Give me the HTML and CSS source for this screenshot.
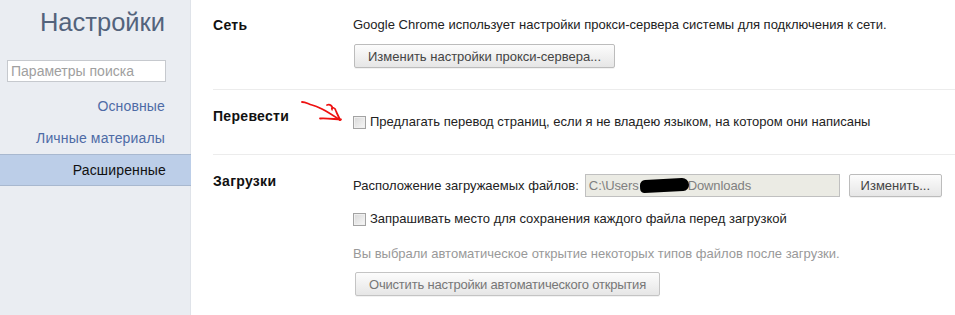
FILE: index.html
```html
<!DOCTYPE html>
<html lang="ru">
<head>
<meta charset="utf-8">
<link rel="stylesheet" href="styles.css">
</head>
<body>
<div class="page">
  <nav class="sidebar">
    <h1 class="title">Настройки</h1>
    <div class="search"><input type="text" placeholder="Параметры поиска"></div>
    <ul class="nav">
      <li class="nav-item">Основные</li>
      <li class="nav-item">Личные материалы</li>
      <li class="nav-item selected">Расширенные</li>
    </ul>
  </nav>
  <main class="main">
    <section class="section s-net">
      <h3 class="sec-title">Сеть</h3>
      <div class="sec-body">
        <div class="line">Google Chrome использует настройки прокси-сервера системы для подключения к сети.</div>
        <button class="btn btn-proxy">Изменить настройки прокси-сервера...</button>
      </div>
    </section>
    <section class="section s-translate">
      <h3 class="sec-title">Перевести</h3>
      <div class="sec-body">
        <label class="check"><span class="box"></span>Предлагать перевод страниц, если я не владею языком, на котором они написаны</label>
      </div>
      <svg class="arrow" width="50" height="30" viewBox="0 0 50 30">
        <path d="M2 3 C6 3 8 5 12 6 C16 7 18 8 22 10 C28 13 34 17 40 21" fill="none" stroke="#ee1111" stroke-width="1.8" stroke-linecap="round"/>
        <path d="M27 6 C30 5 33 7 32 10 C31 8 35 8 36 12 C37 15 39 18 40 21" fill="none" stroke="#ee1111" stroke-width="1.8" stroke-linecap="round"/>
        <path d="M20 19.5 C26 19 33 20 41 20.5" fill="none" stroke="#ee1111" stroke-width="1.8" stroke-linecap="round"/>
      </svg>
    </section>
    <section class="section s-down">
      <h3 class="sec-title">Загрузки</h3>
      <div class="sec-body">
        <div class="loc-row">
          <span class="loc-label">Расположение загружаемых файлов:</span>
          <div class="path">C:\Users<span class="blot"></span>Downloads</div>
          <button class="btn btn-change">Изменить...</button>
        </div>
        <label class="check check-ask"><span class="box"></span>Запрашивать место для сохранения каждого файла перед загрузкой</label>
        <div class="note">Вы выбрали автоматическое открытие некоторых типов файлов после загрузки.</div>
        <button class="btn btn-clear" disabled>Очистить настройки автоматического открытия</button>
      </div>
    </section>
  </main>
</div>
</body>
</html>
```
FILE: styles.css
```css
* { box-sizing: border-box; }
html, body { margin: 0; padding: 0; background: #fff; }
body {
  font-family: "Liberation Sans", Arial, sans-serif;
  font-size: 13px;
  color: #222;
}
.page {
  display: flex;
  width: 955px;
  height: 315px;
  overflow: hidden;
}
.sidebar {
  width: 191px;
  flex: none;
  background: #eaedf2;
  border-right: 1px solid #dfe3e9;
  display: flex;
  flex-direction: column;
}
.title {
  margin: 0;
  padding: 6px 25px 0 0;
  text-align: right;
  font-weight: normal;
  font-size: 25.5px;
  line-height: 32px;
  color: #53637c;
}
.search {
  padding: 22px 0 0 7px;
}
.search input {
  width: 159px;
  height: 22px;
  border: 1px solid #c6c9ce;
  background: #fff;
  font-family: "Liberation Sans", Arial, sans-serif;
  font-size: 14px;
  padding: 1px 3px;
  margin: 0;
  outline: none;
}
.search input::placeholder { color: #a0a0a0; }
.nav {
  list-style: none;
  margin: 0;
  padding: 8px 0 0 0;
}
.nav-item {
  height: 32px;
  line-height: 32px;
  text-align: right;
  padding-right: 25px;
  color: #4e6ba6;
  font-size: 14px;
  letter-spacing: 0.15px;
}
.nav-item.selected {
  line-height: 30px;
  background: #bccee8;
  color: #111;
  border-top: 1px solid #a8b8cf;
  border-bottom: 1px solid #a8b8cf;
  margin-right: -1px;
}
.main {
  flex: 1;
  padding-left: 22px;
}
.section {
  display: grid;
  grid-template-columns: 140px 1fr;
  border-bottom: 1px solid #ececec;
  position: relative;
}
.sec-title {
  margin: 0;
  font-size: 14px;
  font-weight: bold;
  line-height: 18px;
  color: #111;
  letter-spacing: 0.3px;
}
.sec-body { line-height: 18px; }
.s-net { padding: 16px 0 21px 0; }
.btn {
  font-family: "Liberation Sans", Arial, sans-serif;
  font-size: 13px;
  color: #444;
  background: linear-gradient(#fcfcfc, #e6e6e6);
  border: 1px solid #bcbcbc;
  border-radius: 2px;
  height: 24px;
  padding: 0 13px;
  box-shadow: 0 1px 0 rgba(0,0,0,0.05);
}
.btn-proxy { margin-top: 10px; margin-left: 1px; }
.s-translate { height: 65px; }
.s-translate .sec-title { padding-top: 17px; }
.s-translate .sec-body { padding-top: 23px; }
.check {
  display: flex;
  align-items: center;
  gap: 4px;
}
.box {
  width: 13px;
  height: 13px;
  border: 1px solid #a3a3a3;
  background: linear-gradient(135deg, #d8d8d8, #f7f7f7);
  box-shadow: inset 0 0 0 1px #efefef;
  flex: none;
}
.arrow {
  position: absolute;
  left: 87px;
  top: 9px;
}
.s-down { border-bottom: none; padding-top: 16px; }
.s-down .sec-title { padding-top: 1px; }
.loc-row {
  display: flex;
  align-items: center;
  height: 23px;
  margin-top: 3px;
}
.loc-label { margin-right: 6px; }
.path {
  width: 255px;
  height: 23px;
  border: 1px solid #c0c0c0;
  background: #ebebe4;
  color: #808080;
  padding: 2px 3px;
  line-height: 17px;
  white-space: nowrap;
  display: flex;
  align-items: center;
  letter-spacing: -0.1px;
}
.blot {
  display: inline-block;
  width: 49px;
  height: 13px;
  background: #000;
  border-radius: 6px 8px 7px 5px;
  transform: rotate(-3deg);
  margin: 0 -1px 0 1px;
}
.btn-change {
  margin-left: 9px;
  height: 23px;
  width: 93px;
  padding: 0;
}
.check-ask { margin-top: 13px; }
.note {
  margin-top: 17px;
  color: #999;
}
.btn-clear {
  margin-top: 9px;
  margin-left: 2px;
  color: #777;
  border-color: #c4c4c4;
  padding: 0 13px;
  letter-spacing: -0.2px;
}
```
